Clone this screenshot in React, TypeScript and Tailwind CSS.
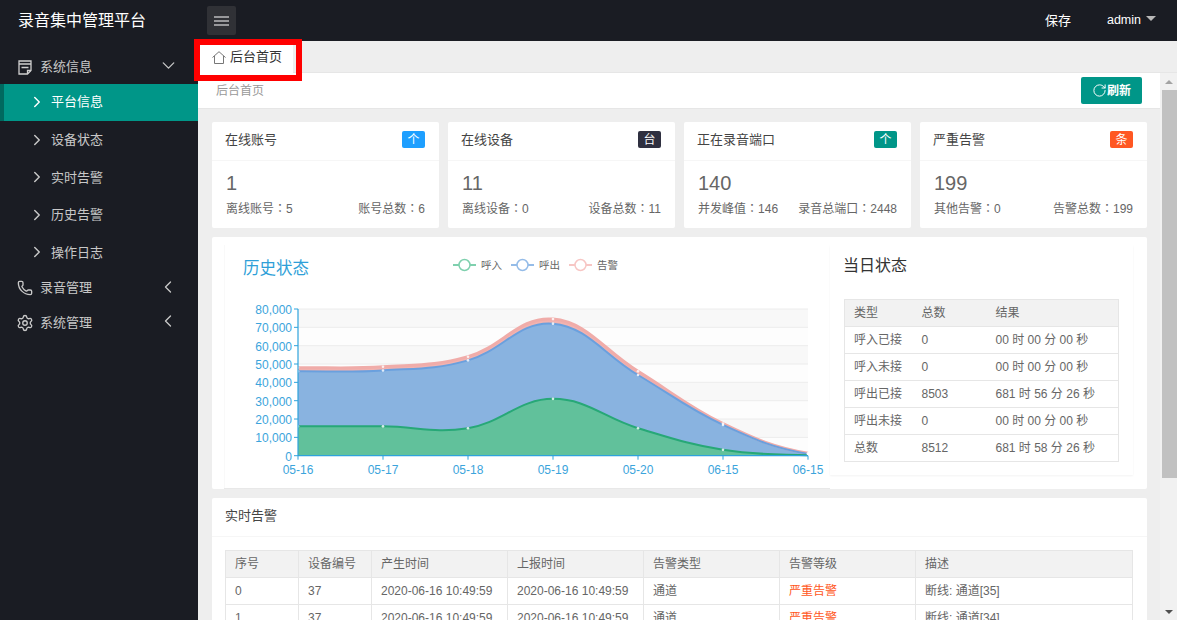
import { Phone, RotateCw, Settings, ChevronDown, ChevronLeft, ChevronRight } from 'lucide-react';

const FONT = { fontFamily: '"Liberation Sans", "Noto Sans CJK SC", sans-serif' };

const STATS = [
  { title: '在线账号', badge: '个', badgeCls: 'bg-[#1e9fff]', value: '1', left: ['离线账号', '5'], right: ['账号总数', '6'] },
  { title: '在线设备', badge: '台', badgeCls: 'bg-[#2f3040]', value: '11', left: ['离线设备', '0'], right: ['设备总数', '11'] },
  { title: '正在录音端口', badge: '个', badgeCls: 'bg-[#009688]', value: '140', left: ['并发峰值', '146'], right: ['录音总端口', '2448'] },
  { title: '严重告警', badge: '条', badgeCls: 'bg-[#ff5722]', value: '199', left: ['其他告警', '0'], right: ['告警总数', '199'] },
];

const TODAY = [
  ['呼入已接', '0', '00 时 00 分 00 秒'],
  ['呼入未接', '0', '00 时 00 分 00 秒'],
  ['呼出已接', '8503', '681 时 56 分 26 秒'],
  ['呼出未接', '0', '00 时 00 分 00 秒'],
  ['总数', '8512', '681 时 58 分 26 秒'],
];

const ALARMS = [
  ['0', '37', '2020-06-16 10:49:59', '2020-06-16 10:49:59', '通道', '严重告警', '断线: 通道[35]'],
  ['1', '37', '2020-06-16 10:49:59', '2020-06-16 10:49:59', '通道', '严重告警', '断线: 通道[34]'],
];

const SUB_MENU = ['设备状态', '实时告警', '历史告警', '操作日志'];

// 图表坐标直接用截图坐标（viewBox 从面板左上角开始）
const X0 = 298;
const STEP = 85;
const Y_ZERO = 455.7;
const yOf = (v: number) => Y_ZERO - (v / 80000) * 146.7;
const XS = [0, 1, 2, 3, 4, 5, 6].map((i) => X0 + i * STEP);
const X_LABELS = ['05-16', '05-17', '05-18', '05-19', '05-20', '06-15', '06-15'];

const GREEN = [16000, 16000, 15000, 31000, 15000, 3200, 300];
const BLUE = [46000, 46500, 52000, 72000, 44000, 16800, 1000];
const RED = [48000, 48500, 54000, 74500, 46000, 17500, 1300];

function smooth(values: number[]) {
  const pts = values.map((v, i) => [XS[i], yOf(v)]);
  let d = `M${pts[0][0]} ${pts[0][1]}`;
  for (let i = 0; i < pts.length - 1; i++) {
    const p0 = pts[Math.max(i - 1, 0)];
    const p1 = pts[i];
    const p2 = pts[i + 1];
    const p3 = pts[Math.min(i + 2, pts.length - 1)];
    const c1y = p1[1] + (p2[1] - p0[1]) * 0.2;
    const c2y = p2[1] - (p3[1] - p1[1]) * 0.2;
    d += ` C${p1[0] + STEP * 0.4} ${c1y} ${p2[0] - STEP * 0.4} ${c2y} ${p2[0]} ${p2[1]}`;
  }
  return d;
}

function Chart() {
  const bands = [80000, 70000, 60000, 50000, 40000, 30000, 20000, 10000];
  const legend = [
    { x: 453, label: '呼入', color: '#7fd0ae' },
    { x: 511, label: '呼出', color: '#95bce8' },
    { x: 569, label: '告警', color: '#f7c6c4' },
  ];
  const greenD = smooth(GREEN);
  const blueD = smooth(BLUE);
  const redD = smooth(RED);
  const close = ` L808 ${Y_ZERO} L298 ${Y_ZERO} Z`;

  return (
    <svg viewBox="212 237 618 252" className="h-[252px] w-[618px] flex-none">
      <line x1="224.5" x2="224.5" y1="245" y2="488" stroke="#f9f9f9" />
      <line x1="224" x2="830" y1="488.5" y2="488.5" stroke="#e8e8e8" />
      <text x="243" y="274" fontSize="16.5" fill="#2f9fd8">历史状态</text>
      {legend.map((l) => (
        <g key={l.label}>
          <line x1={l.x} x2={l.x + 23} y1="265" y2="265" stroke={l.color} strokeWidth="2" />
          <circle cx={l.x + 11.5} cy="265" r="5.5" fill="#fff" stroke={l.color} strokeWidth="1.5" />
          <text x={l.x + 28} y="269" fontSize="10.5" fill="#666">{l.label}</text>
        </g>
      ))}

      {bands.map((b, i) => (
        <rect key={b} x={X0} y={yOf(b)} width="510" height={146.7 / 8} fill={i % 2 === 0 ? '#f8f8f8' : '#fdfdfd'} />
      ))}
      {bands.map((b) => (
        <line key={b} x1={X0} x2="808" y1={yOf(b)} y2={yOf(b)} stroke="#ececec" />
      ))}

      <path d={redD + close} fill="#f2b3b0" />
      <path d={blueD + close} fill="#89b3e0" />
      <path d={greenD + close} fill="#61c19b" />
      <path d={redD} fill="none" stroke="#f0aca9" strokeWidth="3" />
      <path d={blueD} fill="none" stroke="#6aa0de" strokeWidth="2" />
      <path d={greenD} fill="none" stroke="#27a877" strokeWidth="2" />
      {[RED, BLUE, GREEN].map((series, s) =>
        series.map((v, i) => <circle key={`${s}-${i}`} cx={XS[i]} cy={yOf(v)} r="1.3" fill="#fff" fillOpacity="0.8" />),
      )}

      <line x1={X0} x2={X0} y1="309" y2={Y_ZERO} stroke="#2ea3dc" strokeWidth="1.2" />
      <line x1={X0} x2="808" y1={Y_ZERO} y2={Y_ZERO} stroke="#2ea3dc" strokeWidth="1.2" />
      {[...bands, 0].map((b) => (
        <g key={b}>
          <line x1={X0 - 4} x2={X0} y1={yOf(b)} y2={yOf(b)} stroke="#2ea3dc" />
          <text x="292" y={yOf(b) + 5} fontSize="12" textAnchor="end" fill="#3ba4dc">{b.toLocaleString('en-US')}</text>
        </g>
      ))}
      {XS.map((x, i) => (
        <g key={i}>
          <line x1={x} x2={x} y1={Y_ZERO} y2={Y_ZERO + 4} stroke="#2ea3dc" />
          <text x={x} y="474" fontSize="12" textAnchor="middle" fill="#3ba4dc">{X_LABELS[i]}</text>
        </g>
      ))}
    </svg>
  );
}

function MenuIcon({ children }: { children: React.ReactNode }) {
  return <span className="flex w-[15px] flex-none items-center justify-center">{children}</span>;
}

function Sidebar() {
  return (
    <aside className="flex w-[198px] flex-none flex-col bg-[#1a1c23] text-[13px] text-[#c8c8c8]">
      <div className="mt-[9px] flex h-[34px] items-center pl-[17px] pr-[19px]">
        <MenuIcon>
          <svg viewBox="0 0 14 15" className="h-[15px] w-[14px] flex-none" fill="none" stroke="#cfcfcf" strokeWidth="1.3">
            <path d="M1 1h12v9.5L9.5 14H1z" />
            <path d="M1 4h12M3.5 7.5h7M9.5 14v-3.5H13" />
          </svg>
        </MenuIcon>
        <span className="ml-[8px] flex-1">系统信息</span>
        <ChevronDown size={21} strokeWidth={1.5} className="mb-[3px] flex-none" />
      </div>
      <div className="flex h-[37px] items-center border-l-4 border-[#00695f] bg-[#009688] pb-[1px] pl-[24px] text-white">
        <ChevronRight size={18} strokeWidth={1.9} className="flex-none" />
        <span className="ml-[5px]">平台信息</span>
      </div>
      {SUB_MENU.map((m) => (
        <div key={m} className="flex h-[37.5px] items-center pl-[28px]">
          <ChevronRight size={18} strokeWidth={1.9} className="flex-none" />
          <span className="ml-[5px]">{m}</span>
        </div>
      ))}
      <div className="flex h-[34px] items-center pl-[17px] pr-[20px]">
        <MenuIcon>
          <Phone size={16} strokeWidth={2} className="flex-none" />
        </MenuIcon>
        <span className="ml-[8px] flex-1">录音管理</span>
        <ChevronLeft size={20} strokeWidth={1.6} className="mb-[3px] flex-none" />
      </div>
      <div className="flex h-[35px] items-center pl-[17px] pr-[20px]">
        <MenuIcon>
          <Settings size={18} strokeWidth={1.8} className="flex-none" />
        </MenuIcon>
        <span className="ml-[8px] flex-1">系统管理</span>
        <ChevronLeft size={20} strokeWidth={1.6} className="mb-[3px] flex-none" />
      </div>
    </aside>
  );
}

function FakeScrollbar() {
  return (
    <div className="flex w-[17px] flex-none flex-col bg-[#f1f1f1]">
      <div className="flex h-[17px] flex-none items-center justify-center">
        <div className="h-0 w-0 border-x-[4px] border-b-[4px] border-x-transparent border-b-[#a3a3a3]" />
      </div>
      <div className="ml-[2px] h-[388px] flex-none bg-[#c1c1c1]" />
      <div className="flex-1" />
      <div className="flex h-[17px] flex-none items-center justify-center">
        <div className="h-0 w-0 border-x-[4px] border-t-[4px] border-x-transparent border-t-[#505050]" />
      </div>
    </div>
  );
}

function StatText({ pair }: { pair: string[] }) {
  return (
    <span>
      {pair[0]}
      <span className="font-['Noto_Sans_CJK_TC']">：</span>
      {pair[1]}
    </span>
  );
}

export default function App() {
  return (
    <div style={FONT} className="relative flex h-[620px] w-full flex-col overflow-hidden bg-[#eeeeee]">
      <header className="flex h-[41px] flex-none items-center bg-[#1a1c23] text-white">
        <div className="w-[198px] flex-none pl-[18px] text-[16px]">录音集中管理平台</div>
        <button className="ml-[9px] flex h-[29px] w-[29px] items-center justify-center rounded-[2px] bg-[#303136]">
          <svg viewBox="0 0 15 10" className="h-[10px] w-[15px]" stroke="#fff" strokeWidth="1.2">
            <path d="M0 1h15M0 5h15M0 9h15" />
          </svg>
        </button>
        <div className="flex-1" />
        <span className="text-[13px]">保存</span>
        <span className="ml-[36px] text-[12.5px]">admin</span>
        <span className="ml-[5px] mr-[21px] mb-[4px] h-0 w-0 border-x-[5px] border-t-[5px] border-x-transparent border-t-[#b8b8b8]" />
      </header>

      <div className="flex min-h-0 flex-1">
        <Sidebar />

        <div className="flex min-w-0 flex-1 flex-col">
          {/* 标签栏 */}
          <div className="flex h-[32px] flex-none items-end border-b border-[#e6e6e6] pl-[2px]">
            <div className="relative -mb-px flex h-[28px] w-[93px] items-center bg-white pb-[4px] pl-[12px] text-[13px] text-[#333]">
              <svg viewBox="0 0 14 13" className="h-[13px] w-[14px] flex-none" fill="none" stroke="#777" strokeWidth="1">
                <path d="M0.5 6.5L7 0.7l6.5 5.8M2.5 5v7.5h9V5" />
              </svg>
              <span className="ml-[4px]">后台首页</span>
            </div>
          </div>

          <div className="flex min-h-0 flex-1">
            <div className="min-w-0 flex-1 overflow-hidden">
              {/* 面包屑 */}
              <div className="flex h-[36px] items-center border-b border-[#e6e6e6] bg-white pl-[18px] pr-[18px]">
                <span className="flex-1 text-[12px] text-[#999]">后台首页</span>
                <button className="flex h-[27px] w-[61px] items-center justify-center rounded-[2px] bg-[#009688] text-[12px] font-bold text-white">
                  <RotateCw size={15} strokeWidth={1.6} />
                  刷新
                </button>
              </div>

              <div className="pl-[14px] pr-[13px] pt-[13px]">
                {/* 统计卡片 */}
                <div className="flex gap-[9px]">
                  {STATS.map((s) => (
                    <div key={s.title} className="h-[106px] w-[227px] flex-none rounded-[2px] bg-white">
                      <div className="flex h-[39px] items-center justify-between border-b border-[#f6f6f6] pb-[3px] pl-[13px] pr-[14px] text-[13px] text-[#444]">
                        <span>{s.title}</span>
                        <span className={`flex h-[17px] w-[23px] items-center justify-center rounded-[2px] text-[12px] text-white ${s.badgeCls}`}>
                          {s.badge}
                        </span>
                      </div>
                      <div className="px-[14px] pt-[9px]">
                        <div className="text-[20px] leading-[27px] text-[#666]">{s.value}</div>
                        <div className="mt-[2px] flex justify-between text-[12px] leading-[18px] text-[#666]">
                          <StatText pair={s.left} />
                          <StatText pair={s.right} />
                        </div>
                      </div>
                    </div>
                  ))}
                </div>

                {/* 历史状态 / 当日状态 */}
                <div className="mt-[9px] flex h-[252px] rounded-[2px] bg-white">
                  <Chart />
                  <div className="mt-[8px] h-[230px] w-[303px] flex-none bg-white px-[14px] shadow-[0_1px_2px_rgba(0,0,0,0.05)]">
                    <div className="-ml-px pt-[9px] text-[16px] leading-[24px] text-[#333]">当日状态</div>
                    <table className="mt-[21px] w-[275px] table-fixed border-collapse text-[12px] text-[#666]">
                      <colgroup>
                        <col className="w-[68px]" />
                        <col className="w-[74px]" />
                        <col />
                      </colgroup>
                      <thead>
                        <tr className="h-[27px] bg-[#f2f2f2]">
                          {['类型', '总数', '结果'].map((h) => (
                            <th key={h} className="border-y border-[#e6e6e6] pl-[9px] text-left font-normal first:border-l last:border-r">{h}</th>
                          ))}
                        </tr>
                      </thead>
                      <tbody>
                        {TODAY.map((r) => (
                          <tr key={r[0]} className="h-[27px]">
                            {r.map((c, i) => (
                              <td key={i} className="border-y border-[#e6e6e6] pl-[9px] first:border-l last:border-r">{c}</td>
                            ))}
                          </tr>
                        ))}
                      </tbody>
                    </table>
                  </div>
                </div>

                {/* 实时告警 */}
                <div className="mt-[9px] rounded-[2px] bg-white">
                  <div className="flex h-[39px] items-center border-b border-[#f6f6f6] pb-[3px] pl-[13px] text-[13px] text-[#444]">实时告警</div>
                  <div className="px-[13px] pt-[13px]">
                    <table className="w-[908px] table-fixed border-collapse text-[12px] text-[#666]">
                      <colgroup>
                        <col className="w-[73px]" />
                        <col className="w-[73px]" />
                        <col className="w-[136px]" />
                        <col className="w-[136px]" />
                        <col className="w-[136px]" />
                        <col className="w-[136px]" />
                        <col />
                      </colgroup>
                      <thead>
                        <tr className="h-[27px] bg-[#f2f2f2]">
                          {['序号', '设备编号', '产生时间', '上报时间', '告警类型', '告警等级', '描述'].map((h) => (
                            <th key={h} className="border border-[#e6e6e6] pl-[9px] text-left font-normal">{h}</th>
                          ))}
                        </tr>
                      </thead>
                      <tbody>
                        {ALARMS.map((r) => (
                          <tr key={r[0]} className="h-[27px]">
                            {r.map((c, i) => (
                              <td key={i} className={`border border-[#e6e6e6] pl-[9px] ${i === 5 ? 'text-[#ff5722]' : ''}`}>{c}</td>
                            ))}
                          </tr>
                        ))}
                      </tbody>
                    </table>
                  </div>
                </div>
              </div>
            </div>
            <FakeScrollbar />
          </div>
        </div>
      </div>

      {/* 截图上的红色标注框 */}
      <div className="pointer-events-none absolute left-[194px] top-[39px] h-[42px] w-[108px] border-[6px] border-[#ff0000]" />
    </div>
  );
}
